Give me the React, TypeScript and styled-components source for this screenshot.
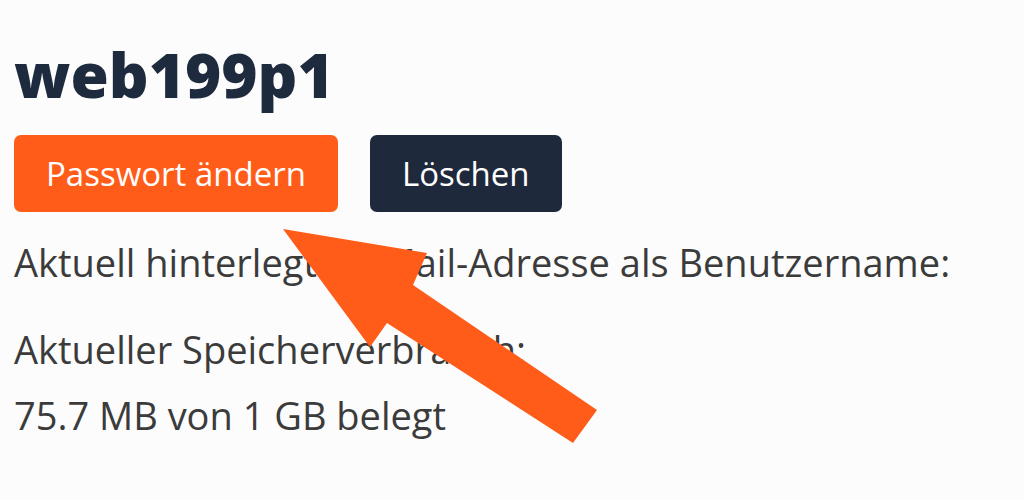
import React from "react";
import styled, { createGlobalStyle } from "styled-components";

const Global = createGlobalStyle`
  html, body { margin: 0; padding: 0; background: #fcfcfc; }
  body { font-family: "Open Sans", "Liberation Sans", sans-serif; }
`;

const Page = styled.div`
  position: relative;
  width: 1024px;
  height: 500px;
  overflow: hidden;
  box-sizing: border-box;
  padding: 42px 14px 0;
`;

const Title = styled.h1`
  margin: 0;
  font-family: "Open Sans", sans-serif;
  font-weight: 800;
  font-size: 62px;
  line-height: 64px;
  color: #1e2a3d;
`;

const ButtonRow = styled.div`
  display: flex;
  gap: 32px;
  margin-top: 29px;
`;

const Button = styled.button<{ $variant: "primary" | "dark" }>`
  height: 77px;
  padding: 0 32px;
  border: none;
  border-radius: 7px;
  font-family: "Open Sans", sans-serif;
  font-size: 33px;
  color: #ffffff;
  background: ${(p) => (p.$variant === "primary" ? "#ff5c1a" : "#1e293b")};
`;

const Text = styled.p<{ $gap: number }>`
  margin: ${(p) => p.$gap}px 0 0;
  font-family: "Open Sans", sans-serif;
  font-size: 38px;
  line-height: 44px;
  color: #3b3b3b;
`;

const Arrow = styled.svg`
  position: absolute;
  left: 0;
  top: 0;
  pointer-events: none;
`;

export default function App() {
  return (
    <>
      <Global />
      <Page>
        <Title>web199p1</Title>
        <ButtonRow>
          <Button $variant="primary">Passwort ändern</Button>
          <Button $variant="dark">Löschen</Button>
        </ButtonRow>
        <Text $gap={28}>Aktuell hinterlegte E-Mail-Adresse als Benutzername:</Text>
        <Text $gap={43}>Aktueller Speicherverbrauch:</Text>
        <Text $gap={22}>75.7 MB von 1 GB belegt</Text>
        <Arrow width="1024" height="500" viewBox="0 0 1024 500">
          <polygon
            points="283,229 427,253 413,285 597,410 573,443 387,323 370,347"
            fill="#ff5c1a"
          />
        </Arrow>
      </Page>
    </>
  );
}
